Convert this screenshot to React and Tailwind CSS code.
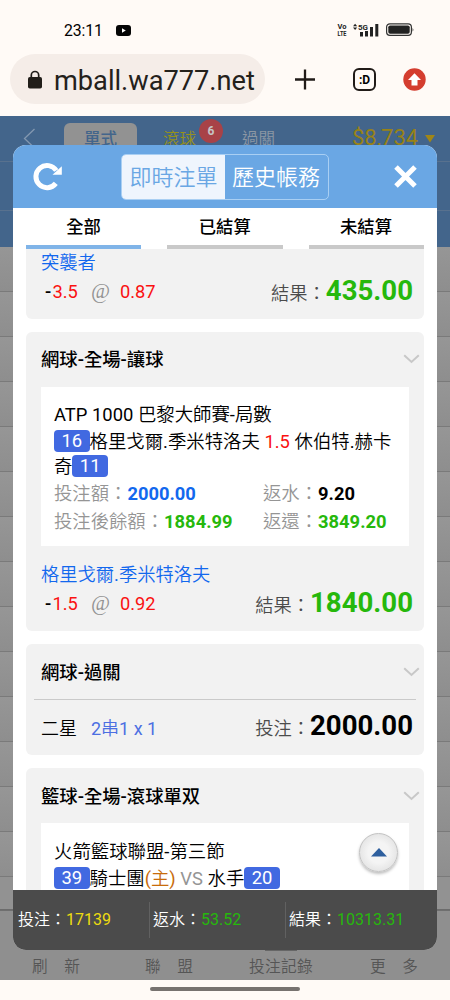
import React from "react";

function StatusBar() {
  return (
    <div className="flex h-[54px] items-start pt-[21px] pl-[64px]">
      <span className="h-5 w-[39px] whitespace-nowrap text-[15.800px] leading-[20px] tracking-[-0.1px]">23:11</span>
      <svg className="mt-[3.5px] ml-[13px]" width="15" height="11" viewBox="0 0 15 11">
        <rect width="15" height="11" rx="3" fill="#050505" />
        <path d="M6 3.3v4.4l3.8-2.2z" fill="#fff" />
      </svg>
      <svg className="mt-[1px] ml-[206px]" width="11" height="15" viewBox="0 0 11 15">
        <g fontWeight="700" fontFamily="Roboto, sans-serif" fill="#222">
          <text x="0.500" y="6.900" fontSize="7.500" textLength="9">Vo</text>
          <text x="0.500" y="14.200" fontSize="7.500" textLength="9" lengthAdjust="spacingAndGlyphs">LTE</text>
        </g>
      </svg>
      <svg className="mt-[1px] ml-[5px]" width="26" height="15" viewBox="0 0 26 15">
        <path d="M0 4.2 2.1 1.8 4.2 4.2zM0 5.6h4.2L2.1 8z" fill="#222" />
        <text x="5" y="7.6" fontSize="8" fontWeight="700" fontFamily="Roboto, sans-serif" fill="#222" textLength="10" lengthAdjust="spacingAndGlyphs">5G</text>
        <path d="M7 10h3v4.5H7zM12 9h3v5.500H12zM17 5h3v9.500h-3zM22.300 2h3v12.500h-3z" fill="#222" />
      </svg>
      <svg className="mt-[2px] ml-[7px]" width="28" height="14" viewBox="0 0 28 14">
        <rect x="0.600" y="0.800" width="24.800" height="11.600" rx="3.300" fill="none" stroke="#333" strokeWidth="1.200" />
        <rect x="2.300" y="2.500" width="21.400" height="8.200" rx="1.800" fill="#222" />
        <path d="M26.600 4.500q1.400 2 0 4.300z" fill="#222" />
      </svg>
    </div>
  );
}

function AddressBar() {
  return (
    <div className="flex h-[62px] items-start">
      <div className="ml-[10px] flex h-[50px] w-[255px] items-center rounded-full bg-[#f5ede8] pl-[18px]">
        <svg width="14" height="19" viewBox="0 0 14 19">
          <path d="M3.300 8V5.200a3.700 3.700 0 0 1 7.400 0V8" fill="none" stroke="#211e19" strokeWidth="1.700" />
          <rect x="0" y="7" width="14" height="11.500" rx="1.800" fill="#211e19" />
        </svg>
        <span className="mt-[3px] ml-[12px] whitespace-nowrap text-[27.200px] leading-[50px] text-[#24211b]">mball.wa777.net</span>
      </div>
      <svg className="mt-[15px] ml-[30px]" width="20" height="21" viewBox="0 0 20 21">
        <path d="M0 10.500h20M10 .5v20" stroke="#211b18" strokeWidth="2.300" />
      </svg>
      <div className="mt-[14px] ml-[38px] flex h-[23px] w-[23px] items-center justify-center rounded-[6px] border-[2.5px] border-[#211b18] text-[12px] leading-none font-bold">
        :D
      </div>
      <svg className="mt-[14px] ml-[27px]" width="23" height="23" viewBox="0 0 23 23">
        <circle cx="11.500" cy="11.500" r="11.200" fill="#d43d2f" />
        <path d="M11.500 5.300 18 12h-3.500v5.500h-6V12H5z" fill="#fff" />
      </svg>
    </div>
  );
}

function Backdrop() {
  const rows = Array.from({ length: 14 });
  return (
    <div className="flex h-[864px] flex-col overflow-hidden bg-[#929292]">
      <div className="h-[131px] shrink-0 bg-[#43658b]">
        <div className="flex h-[46px] items-start border-b border-[#58718e]">
          <svg className="mt-[12px] ml-[23px]" width="13" height="21" viewBox="0 0 13 21">
            <path d="M11.500 1 1.500 10.500l10 9.500" fill="none" stroke="#8398b0" strokeWidth="1.300" />
          </svg>
          <div className="mt-[7px] ml-[28px] h-[39px] w-[73px] rounded-[6px] bg-[#929292] text-center text-[16.5px] leading-[33px] font-medium text-[#43658b] font-[Roboto,'Noto_Sans_CJK_TC',sans-serif]">單式</div>
          <div className="relative ml-[26px] w-[34px] pt-[7px] text-[16.500px] leading-[33px] whitespace-nowrap text-[#96911b]">
            滾球
            <span className="absolute top-[3px] left-[36px] h-[24px] w-[24px] rounded-full bg-[#a84247] text-center text-[12px] leading-[24px] font-bold text-[#c5c5c5]">6</span>
          </div>
          <span className="ml-[45px] w-[110px] pt-[7px] text-[16.500px] leading-[33px] text-[#8c97a4]">過關</span>
          <span className="w-[68px] pt-[6px] text-[22px] leading-[32px] whitespace-nowrap text-[#988216]">$8,734</span>
          <svg className="mt-[19px] ml-[5px]" width="10" height="8" viewBox="0 0 10 8">
            <path d="M0 0h10L5 7.500z" fill="#a08617" />
          </svg>
        </div>
        <div className="h-[49px] border-b border-[#58718e]" />
      </div>
      {rows.map((_, i) => (
        <div key={i} className="h-[45px] shrink-0 border-b border-[#7a7a7a] bg-linear-to-b from-[#969696] to-[#8e8e8e]" />
      ))}
      <div className="h-[33px] shrink-0 border-b border-[#6c6c6c]" />
      <div className="flex grow bg-[#8f8f8f]" />
    </div>
  );
}

function BottomMenu() {
  return (
    <div className="absolute top-[910px] left-0 flex h-[70px] w-full flex-col border-t border-[#6f6f6f] bg-[#8f8f8f]">
      <div className="mt-[39px] ml-[265px] h-[2px] w-[32px] bg-[#666]" />
      <div className="flex h-[29px] text-[15.700px] leading-[31px] whitespace-pre text-[#555]">
        <span className="ml-[32px] w-[48px] tracking-[16.500px]">刷新</span>
        <span className="ml-[65px] w-[48px] tracking-[16.500px]">聯盟</span>
        <span className="ml-[56px] w-[65px] tracking-[0.300px]">投注記錄</span>
        <span className="ml-[56px] w-[48px] tracking-[16.500px]">更多</span>
      </div>
    </div>
  );
}

function Chevron() {
  return (
    <svg width="17" height="10" viewBox="0 0 17 10">
      <path d="M1.200 1.200 8.500 8l7.300-6.800" fill="none" stroke="#c8c8c8" strokeWidth="2" />
    </svg>
  );
}

function CardTitle({ children }) {
  return (
    <div className="flex h-[55px] items-center justify-between pr-[4px] pl-[15px]">
      <h2 className="mt-[2px] text-[18.350px] leading-[24px] font-medium whitespace-nowrap font-[Roboto,'Noto_Sans_CJK_TC',sans-serif]">{children}</h2>
      <Chevron />
    </div>
  );
}

function Chip({ children }) {
  return (
    <span className="inline-block h-[22px] w-[35.500px] rounded-[4px] bg-[#4169e1] text-center align-top text-[18.400px] leading-[22px] text-white">{children}</span>
  );
}

function Odds({ team, handicap, odds, result }) {
  return (
    <div className="pl-[15px]">
      <div className="h-[26px] text-[18.300px] leading-[27px] text-[#1268ee]">{team}</div>
      <div className="flex h-[33px] items-center pr-[11px] pl-[4px] text-[18.300px] leading-[33px]">
        <span className="flex w-[46px] text-[#fa1111]"><b className="w-[7.500px] font-medium text-black">-</b>{handicap}</span>
        <span className="w-[29px] font-['Liberation_Serif',serif] text-[20.500px] text-[#929292] italic">@</span>
        <span className="text-[#fa1111]">{odds}</span>
        <Amount label="結果" value={result} className="text-[#26b80c]" />
      </div>
    </div>
  );
}

function Amount({ label, value, className }) {
  return (
    <span className="ml-auto flex items-center">
      <span className="mt-[3px] text-[18.300px] text-[#4b4b4b]">{label}：</span>
      <b className={"-mt-[3px] text-[27.600px] font-bold " + className}>{value}</b>
    </span>
  );
}

function Stat({ label, value, className, width }) {
  return (
    <span className={"flex text-[18.350px] leading-[27.500px] whitespace-nowrap text-[#959595] " + width}>
      {label}：<b className={"font-bold " + className}>{value}</b>
    </span>
  );
}

function Modal() {
  return (
    <div className="absolute top-[145px] left-[13px] flex h-[805px] w-[424px] flex-col overflow-hidden rounded-[13px] bg-white">
      <header className="flex h-[63px] shrink-0 items-start bg-[#6aa7e4]">
        <svg className="mt-[17px] ml-[20px]" width="30" height="29" viewBox="0 0 30 29">
          <path d="M22.800 21.400A11.100 11.100 0 1 1 23.300 8.500" fill="none" stroke="#fff" strokeWidth="5" />
          <path d="M19.500 12.700h9.300V4.200z" fill="#fff" />
        </svg>
        <div className="mt-[9px] ml-[58px] flex h-[46px] w-[208px] overflow-hidden rounded-[5px] border border-[#a9cff3] text-[22px] leading-[46px] whitespace-nowrap">
          <span className="w-[103px] bg-[#eff5fd] text-center text-[#6aa7e4]">即時注單</span>
          <span className="w-[102px] text-center text-white">歷史帳務</span>
        </div>
        <svg className="mt-[20px] ml-[64.500px]" width="23" height="23" viewBox="0 0 23 23">
          <path d="M2 2l19 19M21 2 2 21" stroke="#fff" strokeWidth="5" />
        </svg>
      </header>
      <nav className="flex h-[41px] shrink-0 gap-[26px] pl-[13px] text-center text-[17.300px] leading-[39px] font-medium font-[Roboto,'Noto_Sans_CJK_TC',sans-serif]">
        <span className="w-[115px] border-b-4 border-[#80b4e8]">全部</span>
        <span className="w-[115.500px] border-b-4 border-[#c9c9c9]">已結算</span>
        <span className="w-[115px] border-b-4 border-[#c9c9c9]">未結算</span>
      </nav>
      <main className="flex h-[642px] flex-col gap-[13px] overflow-hidden px-[13px]">
        <section className="h-[69.500px] shrink-0 rounded-b-[6px] bg-[#f2f2f2]">
          <Odds team="突襲者" handicap="3.5" odds="0.87" result="435.00" />
        </section>
        <section className="h-[299.500px] shrink-0 rounded-[6px] bg-[#f2f2f2]">
          <CardTitle>網球-全場-讓球</CardTitle>
          <div className="mx-[15px] h-[159.500px] bg-white pt-[14px] pl-[13px] text-[18.400px]">
            <div className="h-[29px] leading-[27px] whitespace-nowrap">ATP 1000 巴黎大師賽-局數</div>
            <div className="h-[25px] leading-[24px] whitespace-nowrap">
              <Chip>16</Chip>格里戈爾.季米特洛夫 <span className="text-[#fa1111]">1.5</span> 休伯特.赫卡
            </div>
            <div className="h-[25.500px] leading-[24px]">奇<Chip>11</Chip></div>
            <div className="flex">
              <Stat label="投注額" value="2000.00" className="text-[#1268ee]" width="w-[209px]" />
              <Stat label="返水" value="9.20" className="text-black" width="" />
            </div>
            <div className="flex">
              <Stat label="投注後餘額" value="1884.99" className="text-[#26b80c]" width="w-[209px]" />
              <Stat label="返還" value="3849.20" className="text-[#26b80c]" width="" />
            </div>
          </div>
          <div className="pt-[15px]">
            <Odds team="格里戈爾.季米特洛夫" handicap="1.5" odds="0.92" result="1840.00" />
          </div>
        </section>
        <section className="h-[111px] shrink-0 rounded-[6px] bg-[#f2f2f2]">
          <CardTitle>網球-過關</CardTitle>
          <div className="mx-[8px] border-t border-[#cacaca]" />
          <div className="flex h-[54px] items-center pr-[11px] pl-[15px] text-[18px] leading-[33px]">
            <span className="mt-[2px]">二星</span>
            <span className="mt-[2px] ml-[14px] text-[#4c6fe2]">2串1 x 1</span>
            <Amount label="投注" value="2000.00" className="text-black" />
          </div>
        </section>
        <section className="h-[300px] shrink-0 rounded-[6px] bg-[#f2f2f2]">
          <CardTitle>籃球-全場-滾球單双</CardTitle>
          <div className="mx-[15px] h-[160px] bg-white pt-[15px] pl-[13px] text-[18.400px]">
            <div className="h-[29px] leading-[27px] whitespace-nowrap">火箭籃球聯盟-第三節</div>
            <div className="leading-[24px] whitespace-nowrap">
              <Chip>39</Chip>騎士團<span className="text-[#c86c0b]">(主)</span> <span className="text-[#959595]">VS</span> 水手<Chip>20</Chip>
            </div>
          </div>
        </section>
      </main>
      <footer className="flex h-[60px] shrink-0 items-start bg-[#4b4b4b] pt-[12px] text-[16px] leading-[36px] whitespace-nowrap text-white">
        <span className="w-[136px] pl-[5px]">投注：<span className="text-[#eddb10]">17139</span></span>
        <span className="w-[136px] border-l border-[#616161] pl-[3px]">返水：<span className="text-[#26b80c]">53.52</span></span>
        <span className="border-l border-[#616161] pl-[3px]">結果：<span className="text-[#26b80c]">10313.31</span></span>
      </footer>
      <button className="absolute top-[688px] left-[346px] flex h-[39px] w-[39px] items-center justify-center rounded-full border border-[#c2c2c2] bg-radial from-[#f4f4f4] from-40% to-[#d9d9d9] shadow-[0_2px_3px_rgba(0,0,0,0.25)]">
        <svg width="16" height="9" viewBox="0 0 16 9">
          <path d="M8 0 16 8.500H0z" fill="#2e5f9e" />
        </svg>
      </button>
    </div>
  );
}

export default function App() {
  return (
    <div lang="zh-Hant" className="relative h-[1000px] w-[450px] overflow-hidden bg-[#fffaf6] font-[Roboto,'Noto_Sans_CJK_TC_DemiLight','Noto_Sans_CJK_TC_Light','Noto_Sans_CJK_TC',sans-serif] text-black">
      <StatusBar />
      <AddressBar />
      <Backdrop />
      <div className="flex h-[20px] justify-center pt-[7px]">
        <div className="h-[4px] w-[150px] rounded-full bg-[#77726f]" />
      </div>
      <BottomMenu />
      <Modal />
    </div>
  );
}
